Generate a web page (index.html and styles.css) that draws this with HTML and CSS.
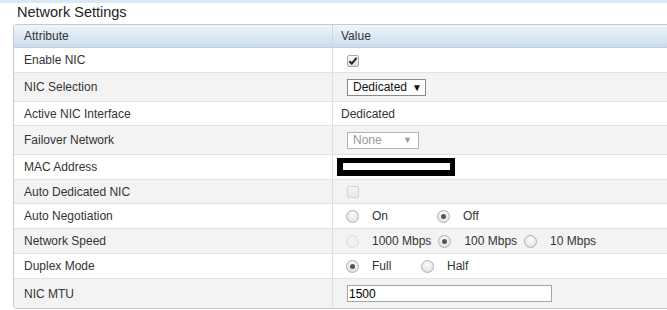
FILE: index.html
```html
<!DOCTYPE html>
<html>
<head>
    <title>Network Settings</title>
    <link rel="stylesheet" href="styles.css">
</head>
<body>

<div class="topbar"></div>
<h2 class="title">Network Settings</h2>

<table class="settings">
    <tr class="head">
        <th class="attr">Attribute</th>
        <th>Value</th>
    </tr>
    <tr>
        <td class="attr">Enable NIC</td>
        <td><span class="check on">
            <svg width="10" height="10" viewBox="0 0 10 10"><path d="M1.5 5.2 L3.8 7.6 L8.6 1.8" fill="none" stroke="#222" stroke-width="2"/></svg>
        </span></td>
    </tr>
    <tr class="alt tall">
        <td class="attr">NIC Selection</td>
        <td><span class="select sel-nic">Dedicated <span class="arrow">&#9660;</span></span></td>
    </tr>
    <tr class="short">
        <td class="attr">Active NIC Interface</td>
        <td>Dedicated</td>
    </tr>
    <tr class="alt tall">
        <td class="attr">Failover Network</td>
        <td><span class="select sel-fail disabled">None <span class="arrow">&#9660;</span></span></td>
    </tr>
    <tr>
        <td class="attr">MAC Address</td>
        <td><span class="redact"></span></td>
    </tr>
    <tr class="alt short">
        <td class="attr">Auto Dedicated NIC</td>
        <td><span class="check disabled"></span></td>
    </tr>
    <tr>
        <td class="attr">Auto Negotiation</td>
        <td>
            <div class="radios neg">
                <span class="opt"><span class="radio"></span>On</span>
                <span class="opt"><span class="radio on"></span>Off</span>
            </div>
        </td>
    </tr>
    <tr class="alt">
        <td class="attr">Network Speed</td>
        <td>
            <div class="radios speed">
                <span class="opt"><span class="radio disabled"></span>1000 Mbps</span>
                <span class="opt"><span class="radio on"></span>100 Mbps</span>
                <span class="opt"><span class="radio"></span>10 Mbps</span>
            </div>
        </td>
    </tr>
    <tr>
        <td class="attr">Duplex Mode</td>
        <td>
            <div class="radios duplex">
                <span class="opt"><span class="radio on"></span>Full</span>
                <span class="opt"><span class="radio"></span>Half</span>
            </div>
        </td>
    </tr>
    <tr class="alt tall last">
        <td class="attr">NIC MTU</td>
        <td><input class="mtu" type="text" value="1500"></td>
    </tr>
</table>

</body>
</html>
```

FILE: styles.css
```css
body {
    margin: 0;
    overflow: hidden;
    font-family: "Liberation Sans", Arial, sans-serif;
    color: #333;
    background-color: #fff;
}

.topbar {
    height: 3px;
    background-color: #dbe8f6;
}

.title {
    font-size: 14.5px;
    font-weight: normal;
    color: #222;
    margin: 1px 0 3px 17px;
    line-height: 17px;
}

.settings {
    margin-left: 13px;
    width: 690px;
    border: 1px solid #c8c8c8;
    border-radius: 4px;
    border-spacing: 0;
    font-size: 12px;
}

.settings th, .settings td {
    text-align: left;
    font-weight: normal;
    padding: 0 0 0 8px;
    height: 24px;
    border-bottom: 1px solid #e2e2e2;
    white-space: nowrap;
}

.settings .attr {
    width: 308px;
    padding-left: 10px;
    border-right: 1px solid #dedede;
}

.settings tr.tall td {
    height: 28px;
}

.settings tr.short td {
    height: 23px;
}

.settings tr.last td {
    border-bottom: none;
    height: 29px;
}

.settings tr.alt td {
    background-color: #f3f3f3;
}

.settings tr.head th {
    height: 22px;
    background: linear-gradient(#eef6fd, #cddcec);
    border-bottom: 1px solid #bccddf;
    color: #333;
}

.settings tr.head th.attr {
    border-radius: 3px 0 0 0;
    border-right-color: #c9d6e4;
}

.settings tr.last td.attr {
    border-radius: 0 0 0 3px;
}

.check {
    display: inline-block;
    vertical-align: middle;
    box-sizing: border-box;
    width: 12px;
    height: 12px;
    margin-left: 6px;
    border: 1px solid #a9a9a9;
    border-radius: 2px;
    background: linear-gradient(#fafafa, #dcdcdc);
    position: relative;
}

.check svg {
    position: absolute;
    left: 0;
    top: 0;
}

.check.disabled {
    border-color: #d4d4d4;
    background: linear-gradient(#f4f4f4, #e8e8e8);
}

.select {
    display: inline-flex;
    align-items: center;
    box-sizing: border-box;
    height: 17px;
    margin-left: 6px;
    padding-left: 5px;
    border: 1px solid #8a8a8a;
    background-color: #fff;
    color: #111;
    font-size: 12px;
    vertical-align: middle;
}

.select .arrow {
    font-size: 10px;
    margin-left: 5px;
}

.sel-nic {
    width: 79px;
}

.sel-fail {
    width: 72px;
}

.sel-fail .arrow {
    margin-left: auto;
    margin-right: 6px;
    font-size: 9px;
}

.select.disabled {
    border-color: #b4b4b4;
    color: #9a9a9a;
}

.redact {
    display: inline-block;
    vertical-align: middle;
    box-sizing: border-box;
    width: 118px;
    height: 18px;
    margin-left: -4px;
    border: 5px solid #000;
    border-left-width: 6px;
    border-bottom-width: 6px;
    background-color: #fff;
}

.radios {
    display: flex;
    align-items: center;
    margin-left: 5px;
}

.opt {
    display: flex;
    align-items: center;
}

.radio {
    display: inline-block;
    box-sizing: border-box;
    width: 13px;
    height: 13px;
    margin-right: 13px;
    border: 1px solid #b0b0b0;
    border-radius: 50%;
    background: radial-gradient(circle at 50% 35%, #fdfdfd, #dadada);
    position: relative;
}

.radio.on::after {
    content: "";
    position: absolute;
    left: 3px;
    top: 3px;
    width: 5px;
    height: 5px;
    border-radius: 50%;
    background-color: #555;
}

.radio.disabled {
    border-color: #dadada;
    background: #f0f0f0;
}

.neg .opt {
    width: 91px;
}

.duplex .opt {
    width: 75px;
}

.speed .opt {
    margin-right: 7px;
}

.mtu {
    box-sizing: border-box;
    width: 205px;
    height: 17px;
    margin: 0 0 0 6px;
    padding: 0 1px;
    border: 1px solid #a5a5a5;
    font-family: "Liberation Sans", Arial, sans-serif;
    font-size: 12px;
    color: #000;
    vertical-align: middle;
}
```
